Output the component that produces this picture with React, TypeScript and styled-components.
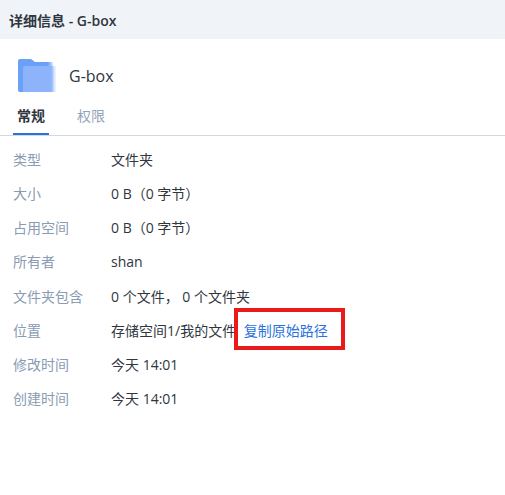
import React from 'react'
import styled, { createGlobalStyle } from 'styled-components'

const GlobalStyle = createGlobalStyle`
  html, body {
    margin: 0;
    padding: 0;
    background: #fff;
  }
  body {
    font-family: "Open Sans", "Noto Sans CJK SC", sans-serif;
  }
`

const Page = styled.div`
  width: 505px;
  height: 495px;
  overflow: hidden;
  display: flex;
  flex-direction: column;
`

const TitleBar = styled.div`
  height: 39px;
  flex: none;
  display: flex;
  align-items: center;
  padding-left: 9px;
  background: #f0f3f8;
  color: #2f3640;
  font-size: 14px;
  font-weight: 600;
`

const Header = styled.div`
  display: flex;
  align-items: center;
  gap: 13px;
  height: 74px;
  flex: none;
  padding-left: 18px;
`

const FileName = styled.div`
  font-size: 16px;
  font-weight: 500;
  color: #2f3640;
`

const Tabs = styled.div`
  display: flex;
  gap: 24px;
  height: 22px;
  flex: none;
  padding-left: 13px;
  border-bottom: 1px solid #d5d8dc;
`

const Tab = styled.div<{ $active?: boolean }>`
  box-sizing: border-box;
  height: 22px;
  width: 36px;
  line-height: 6px;
  text-align: center;
  font-size: 14px;
  font-weight: ${p => (p.$active ? 700 : 400)};
  color: ${p => (p.$active ? '#2f3640' : '#93a3b8')};
  border-bottom: ${p => (p.$active ? '2px solid #2a72de' : 'none')};
`

const Rows = styled.div`
  padding: 6px 0 0 13px;
  display: flex;
  flex-direction: column;
`

const Row = styled.div`
  display: flex;
  align-items: center;
  height: 34.15px;
  font-size: 14px;
`

const Label = styled.div`
  width: 98px;
  flex: none;
  color: #8a9bb3;
`

const Value = styled.div`
  color: #2f3640;
  white-space: pre;
`

const LinkBox = styled.div`
  position: relative;
  margin-left: 7.5px;
  color: #2a72de;
`

const Highlight = styled.div`
  position: absolute;
  left: -10px;
  top: -12px;
  width: 103px;
  height: 34px;
  border: 4px solid #ea1a1a;
`

const rows: [string, string][] = [
  ['类型', '文件夹'],
  ['大小', '0 B（0 字节）'],
  ['占用空间', '0 B（0 字节）'],
  ['所有者', 'shan'],
  ['文件夹包含', '0 个文件， 0 个文件夹'],
  ['位置', '存储空间1/我的文件'],
  ['修改时间', '今天 14:01'],
  ['创建时间', '今天 14:01'],
]

function FolderIcon() {
  return (
    <svg width="38" height="36" viewBox="0 0 38 36">
      <defs>
        <linearGradient id="fade" x1="0" x2="1" y1="0" y2="0">
          <stop offset="0.82" stopColor="#8db4fb" />
          <stop offset="1" stopColor="#8db4fb" stopOpacity="0.1" />
        </linearGradient>
        <linearGradient id="back" x1="0" x2="1" y1="0" y2="0">
          <stop offset="0.85" stopColor="#6aa0f8" />
          <stop offset="1" stopColor="#6aa0f8" stopOpacity="0.3" />
        </linearGradient>
      </defs>
      <path d="M2 1h11l4 3h16a2 2 0 0 1 2 2v28H2a2 2 0 0 1-2-2V3a2 2 0 0 1 2-2z" fill="url(#back)" />
      <path d="M7 8h31v26H5a1 1 0 0 0 0-1V10a2 2 0 0 1 2-2z" fill="url(#fade)" />
    </svg>
  )
}

export default function App() {
  return (
    <Page>
      <GlobalStyle />
      <TitleBar>详细信息 - G-box</TitleBar>
      <Header>
        <FolderIcon />
        <FileName>G-box</FileName>
      </Header>
      <Tabs>
        <Tab $active>常规</Tab>
        <Tab>权限</Tab>
      </Tabs>
      <Rows>
        {rows.map(([label, value]) => (
          <Row key={label}>
            <Label>{label}</Label>
            <Value>{value}</Value>
            {label === '位置' && (
              <LinkBox>
                复制原始路径
                <Highlight />
              </LinkBox>
            )}
          </Row>
        ))}
      </Rows>
    </Page>
  )
}
